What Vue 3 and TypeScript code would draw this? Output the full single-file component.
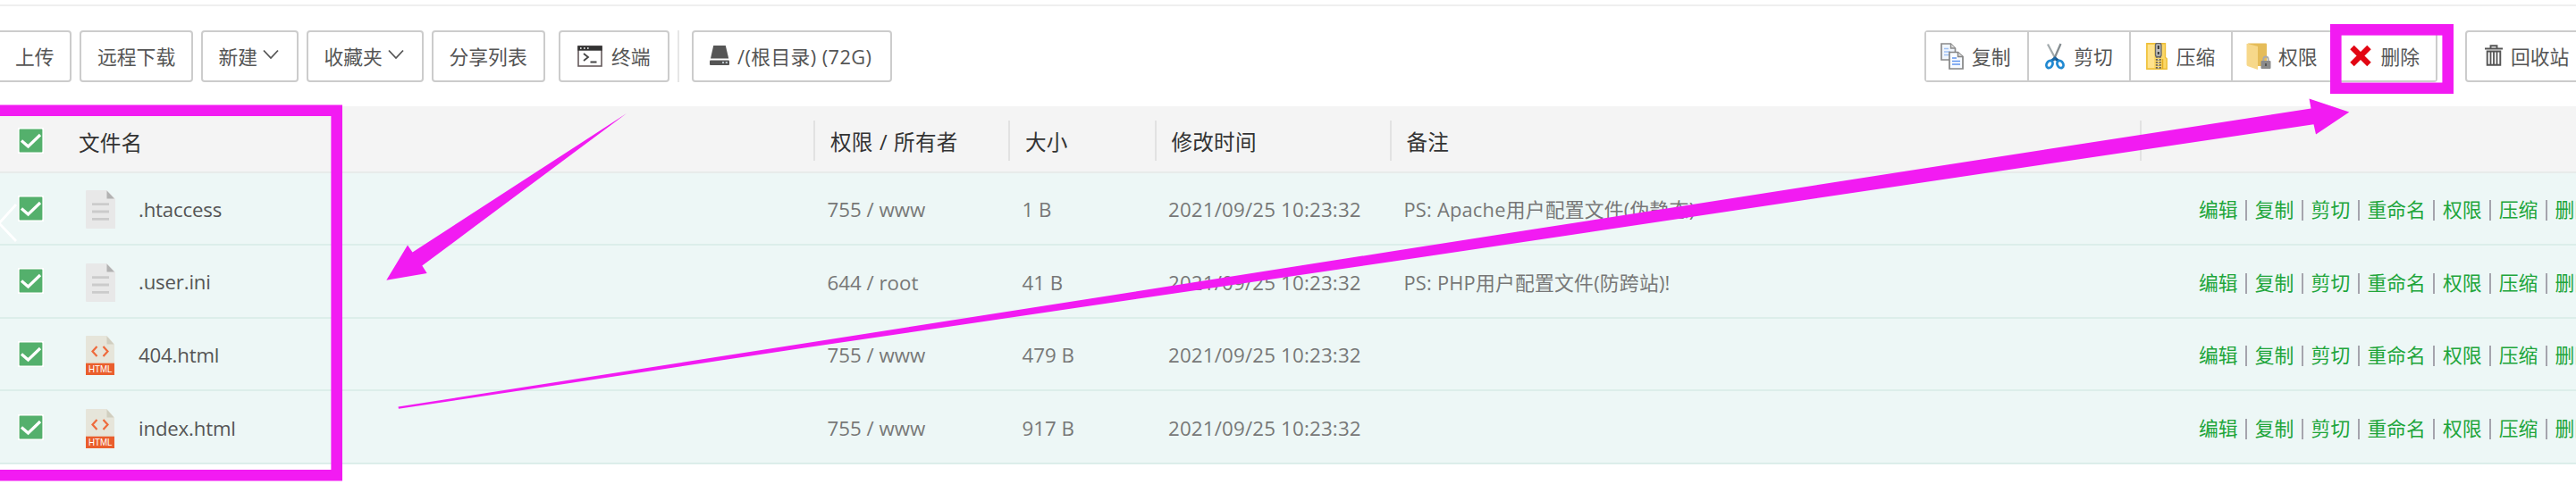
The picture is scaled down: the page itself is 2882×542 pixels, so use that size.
<script setup lang="ts">
interface FileRow {
  name: string
  kind: 'text' | 'html'
  owner: string
  size: string
  time: string
  note: string
}

const files: FileRow[] = [
  { name: '.htaccess', kind: 'text', owner: '755 / www', size: '1 B', time: '2021/09/25 10:23:32', note: 'PS: Apache用户配置文件(伪静态)' },
  { name: '.user.ini', kind: 'text', owner: '644 / root', size: '41 B', time: '2021/09/25 10:23:32', note: 'PS: PHP用户配置文件(防跨站)!' },
  { name: '404.html', kind: 'html', owner: '755 / www', size: '479 B', time: '2021/09/25 10:23:32', note: '' },
  { name: 'index.html', kind: 'html', owner: '755 / www', size: '917 B', time: '2021/09/25 10:23:32', note: '' },
]

const operations: string[] = ['编辑', '复制', '剪切', '重命名', '权限', '压缩', '删除']
const columns: string[] = ['权限 / 所有者', '大小', '修改时间', '备注', '']
</script>

<template>
  <div class="page">
    <div class="topline"></div>
    <div class="toolbar">
      <button class="btn upload">上传</button>
      <button class="btn remote">远程下载</button>
      <button class="btn create">新建
        <svg class="chev" viewBox="0 0 18 12"><path d="M1 1.5 9 10 17 1.5" /></svg>
      </button>
      <button class="btn fav">收藏夹
        <svg class="chev" viewBox="0 0 18 12"><path d="M1 1.5 9 10 17 1.5" /></svg>
      </button>
      <button class="btn share">分享列表</button>
      <button class="btn term">
        <svg class="term-icon" viewBox="0 0 28 24">
          <rect x="1" y="1" width="26" height="22" fill="#fff" stroke="#665a5c" stroke-width="1.6" />
          <rect x="0.3" y="0.3" width="27.4" height="5.4" fill="#333" />
          <path d="M3 3h1.6M7 3h1.6M11 3h1.6" stroke="#fff" stroke-width="1.4" />
          <path d="M7 9l5 4-5 4M14.500 18.500h7" fill="none" stroke="#444" stroke-width="1.8" />
        </svg>终端
      </button>
      <i class="split"></i>
      <button class="btn disk">
        <svg class="disk-icon" viewBox="0 0 22 22">
          <path d="M4.200 0h13.600l3.400 14.500H1z" fill="#555" />
          <path d="M1 16.500h20q1 0 1 1v3.500q0 1-1 1H1q-1 0-1-1v-3.500q0-1 1-1z" fill="#555" />
          <path d="M14 19h2M17.800 19h2" stroke="#dceaf2" stroke-width="1.7" />
        </svg>/(根目录) (72G)
      </button>
      <div class="group">
        <button class="seg">
          <svg class="i-copy" viewBox="0 0 26 30">
            <path d="M1 1h10.500l5 5v13H1z" fill="#f1f6fc" stroke="#8b8b8b" stroke-width="1.7" />
            <path d="M11.500 1v5h5" fill="#ddd" stroke="#8b8b8b" stroke-width="1.4" />
            <path d="M4 6.500h5M4 10h7M4 13.500h7" stroke="#9fc1f5" stroke-width="1.5" />
            <path d="M10 10.500h9.500l5.500 5v13.500H10z" fill="#f8fbff" stroke="#858585" stroke-width="1.7" />
            <path d="M19.500 10.500v5H25" fill="#ddd" stroke="#858585" stroke-width="1.4" />
            <path d="M13 17h5M13 20.500h9M13 24h9" stroke="#5f95ee" stroke-width="1.6" />
          </svg><span>复制</span>
        </button>
        <button class="seg">
          <svg class="i-cut" viewBox="0 0 22 30">
            <path d="M3 1.500 12.800 20" stroke="#a3abad" stroke-width="2.200" />
            <path d="M17.500 1 9.300 20" stroke="#858d91" stroke-width="2.300" />
            <path d="M10.300 16.500l5 4" stroke="#125590" stroke-width="3.200" />
            <path d="M11.700 16.500l-5 4" stroke="#1c68a6" stroke-width="3" />
            <ellipse cx="5" cy="24" rx="3.200" ry="4.300" transform="rotate(30 5 24)" fill="none" stroke="#2189d1" stroke-width="2.800" />
            <ellipse cx="17" cy="24" rx="3.200" ry="4.300" transform="rotate(-30 17 24)" fill="none" stroke="#2189d1" stroke-width="2.800" />
          </svg><span>剪切</span>
        </button>
        <button class="seg">
          <svg class="i-zip" viewBox="0 0 24 30">
            <path d="M.8.800H21.500v15.500l1.700 1.500v11.400H.8z" fill="#fbd768" stroke="#eebe35" stroke-width="1.400" />
            <path d="M2 2h7v26H2z" fill="#ffe28c" />
            <path d="M18.500 18v11" stroke="#e3ae25" stroke-width="1.500" />
            <path d="M13.800 15v15" stroke="#70664f" stroke-width="6" stroke-dasharray="1.700 1.300" />
            <path d="M13.800 15v15" stroke="#e5e3dc" stroke-width="1.500" stroke-dasharray="1.500 1.500" />
            <rect x="10.500" y=".500" width="6.500" height="15" rx="2" fill="#bcbcbc" stroke="#666" stroke-width="1.300" />
            <path d="M13.800 3v4M13.800 10v3" stroke="#333" stroke-width="2" />
          </svg><span>压缩</span>
        </button>
        <button class="seg">
          <svg class="i-perm" viewBox="0 0 28 30">
            <path d="M2 .500h20q1 0 1 1V26H12z" fill="#e5bc59" />
            <path d="M1 .800 13 4v26L1.500 26Q.5 25.500.5 24V1.500z" fill="#f7d88a" />
            <path d="M19.300 21v-2.500q0-3 2.700-3t2.700 3V21" fill="none" stroke="#aaa" stroke-width="1.900" />
            <rect x="16.500" y="20" width="11" height="9" rx="1" fill="#8b8b8b" />
            <path d="M22 23v3" stroke="#555" stroke-width="2" />
          </svg><span>权限</span>
        </button>
        <button class="seg">
          <svg class="i-del" viewBox="0 0 24 25">
            <path d="M2.500 3 21.500 22M21.500 3 2.500 22" stroke="#e20613" stroke-width="6.300" />
          </svg><span>删除</span>
        </button>
      </div>
      <button class="btn bin">
        <svg class="i-bin" viewBox="0 0 20 24">
          <path d="M0 4.500h20M6.500 4V1.200h7V4" fill="none" stroke="#555" stroke-width="1.900" />
          <path d="M2.700 7.500v15.300h14.600V7.500z" fill="none" stroke="#555" stroke-width="1.900" />
          <path d="M6.500 8v14M10 8v14M13.500 8v14" stroke="#555" stroke-width="1.800" />
        </svg>回收站
      </button>
    </div>

    <div class="table">
      <div class="row head">
        <div class="check"><svg viewBox="0 0 29 29"><rect width="29" height="29" rx="2.500" fill="#54b06c" /><path d="M4 14.500 11.500 21 25 8" /></svg></div>
        <div class="name">文件名</div>
        <div v-for="(c, i) in columns" :key="i" class="col">{{ c }}</div>
      </div>
      <div v-for="f in files" :key="f.name" class="row file">
        <div class="check"><svg viewBox="0 0 29 29"><rect width="29" height="29" rx="2.500" fill="#54b06c" /><path d="M4 14.500 11.500 21 25 8" /></svg></div>
        <div class="name">
          <svg v-if="f.kind === 'text'" class="ficon" viewBox="0 0 33 44">
            <path d="M1 0h22.500L33 9.500V43H1Q0 43 0 42V1Q0 0 1 0z" fill="#e8e8e8" />
            <path d="M23.500.500 32 9.500h-8.500z" fill="#b2b2b2" />
            <path d="M7 15.700h19M7 24h19M7 32.300h19" stroke="#cbcbcb" stroke-width="2.800" />
          </svg>
          <svg v-else class="ficon" viewBox="0 0 33 44">
            <path d="M1 0h22.500L32 9.500V32H0V1Q0 0 1 0z" fill="#e6e5da" />
            <path d="M23.500.500 31.500 9.500h-8z" fill="#d0cebf" />
            <path d="M12.500 12 7.500 17.500l5 5.500M19.500 12l5 5.500-5 5.500" fill="none" stroke="#ee6a3c" stroke-width="2.200" />
            <rect y="30.700" width="32" height="13.300" fill="#ea5e2d" />
            <text x="3" y="41.400" textLength="26.500" lengthAdjust="spacingAndGlyphs">HTML</text>
          </svg>
          <span>{{ f.name }}</span>
        </div>
        <div class="cell">{{ f.owner }}</div>
        <div class="cell">{{ f.size }}</div>
        <div class="cell time">{{ f.time }}</div>
        <div class="cell note">{{ f.note }}</div>
        <div class="ops">
          <template v-for="(o, i) in operations" :key="o">
            <i v-if="i > 0" class="bar"></i><a>{{ o }}</a>
          </template>
        </div>
      </div>
    </div>

    <svg class="marks" viewBox="0 0 2882 542">
      <path d="M18 229-1 250l19 20" fill="none" stroke="#fff" stroke-width="2.800" />
      <path d="M-10 123.800H376.700V532.300H-10" fill="none" stroke="#f21bf2" stroke-width="12.600" />
      <rect x="2613.300" y="33.300" width="125.400" height="65.500" fill="none" stroke="#f21bf2" stroke-width="12.600" />
      <path d="M701 127 461.500 282.500 456 274.500 432.300 313.700 477.700 306 472.300 297.500z" fill="#f21bf2" />
      <path d="M445.500 455.500 900 384.500 1560 281 2130 192 2585.500 121.500 2583.500 110.500 2628.300 125.500 2591 150.500 2588.500 139.300 2130 207.500 1560 292.500 900 389.500 446 457.800z" fill="#f21bf2" />
    </svg>
  </div>
</template>

<style>
body { margin: 0; }
</style>

<style scoped>
.page {
  position: relative;
  width: 2882px;
  height: 542px;
  overflow: hidden;
  background: #fff;
  color: #555;
  font: 21.8px/30px "Open Sans", "Noto Sans CJK SC", sans-serif;
}
.page::before { content: ""; display: block; height: 5px; }
.topline { height: 2px; background: #efefef; }
.toolbar { display: flex; height: 58px; padding-top: 27px; align-items: stretch; white-space: nowrap; }
button {
  box-sizing: border-box;
  margin: 0;
  padding: 1px 0 0;
  font: inherit;
  color: #555;
  background: #fff;
  display: flex;
  align-items: center;
  white-space: nowrap;
}
.btn { border: 2px solid #ccc; border-radius: 4px; flex: none; }
.upload { width: 84px; margin-left: -4px; padding-left: 19px; }
.remote { width: 127px; margin-left: 9px; padding-left: 18px; }
.create { width: 109px; margin-left: 9px; padding-left: 17.500px; }
.fav { width: 131px; margin-left: 9px; padding-left: 17.500px; }
.share { width: 127px; margin-left: 9px; padding-left: 17.500px; }
.term { width: 124px; margin-left: 15px; padding-left: 19px; }
.split { flex: none; width: 2px; margin: 0 14px 0 9px; background: #e6e6e6; }
.disk { width: 224px; padding-left: 18px; letter-spacing: .4px; }
.chev { width: 18px; height: 12px; margin: 0 0 5px 6px; fill: none; stroke: #555; stroke-width: 1.8; }
.term-icon { width: 28px; height: 24px; margin: 0 10px 2px 0; }
.disk-icon { width: 22px; height: 22px; margin: 0 9px 3px 0; }
.group { display: flex; box-sizing: border-box; width: 574px; margin-left: 1155px; border: 2px solid #ccc; border-radius: 4px; flex: none; }
.seg { width: 114.4px; border: 0; border-left: 2px solid #ccc; flex: none; }
.seg svg { margin-bottom: 2px; }
.seg:first-child { border-left: 0; width: 112.500px; }
.seg span { margin-left: auto; padding-right: 18px; }
.i-copy { width: 26px; height: 30px; margin-left: 16px; }
.i-cut { width: 22px; height: 30px; margin-left: 18px; }
.i-zip { width: 24px; height: 30px; margin-left: 17px; }
.i-perm { width: 28px; height: 30px; margin-left: 15px; }
.i-del { width: 24px; height: 25px; margin-left: 16px; }
.bin { width: 160px; margin-left: 31px; padding-left: 20px; }
.i-bin { width: 20px; height: 24px; margin: 0 9px 4px 0; }

.table { margin-top: 27px; }
.row { display: grid; grid-template-columns: 88px 822px 218px 163.500px 263px 839.500px 488px; box-sizing: border-box; align-items: center; white-space: nowrap; }
.head { height: 74.500px; background: #f4f4f4; border-bottom: 2px solid #e8ebea; color: #333; font-size: 23.6px; letter-spacing: .2px; }
.head .name { padding-top: 9px; }
.head .check { padding-top: 4px; }
.file { height: 81.600px; background: #edf7f6; border-bottom: 2px solid #dceeea; }
.check { padding-left: 20px; display: flex; }
.check svg { width: 29px; height: 29px; fill: none; stroke: #fff; stroke-width: 3.2; }
.col { box-sizing: border-box; height: 45px; line-height: 49px; padding-left: 17px; border-left: 2px solid #e2e2e2; margin-top: 4px; }
.col:nth-child(3) { word-spacing: 1px; }
.name { display: flex; align-items: center; }
.file .name { padding: 4px 0 0 8px; }
.ficon { width: 33px; height: 44px; }
.ficon text { font: 11.500px "Liberation Sans", sans-serif; fill: #fff; }
.name span { margin-left: 26px; font-size: 22.200px; letter-spacing: -.16px; padding-bottom: 1px; }
.cell { padding: 4px 0 0 15.500px; color: #777; font-size: 22.300px; }
.time { letter-spacing: .18px; }
.note { font-size: 21.800px; letter-spacing: .24px; padding-left: 16px; }
.ops { display: flex; align-items: center; padding: 4px 0 0 66px; color: #20a53a; font-size: 21.800px; }
.ops a { flex: none; }
.bar { flex: none; width: 2px; height: 23px; margin: 1px 8.600px 0; background: #a5a4ad; }

.marks { position: absolute; left: 0; top: 0; width: 2882px; height: 542px; pointer-events: none; }
</style>
